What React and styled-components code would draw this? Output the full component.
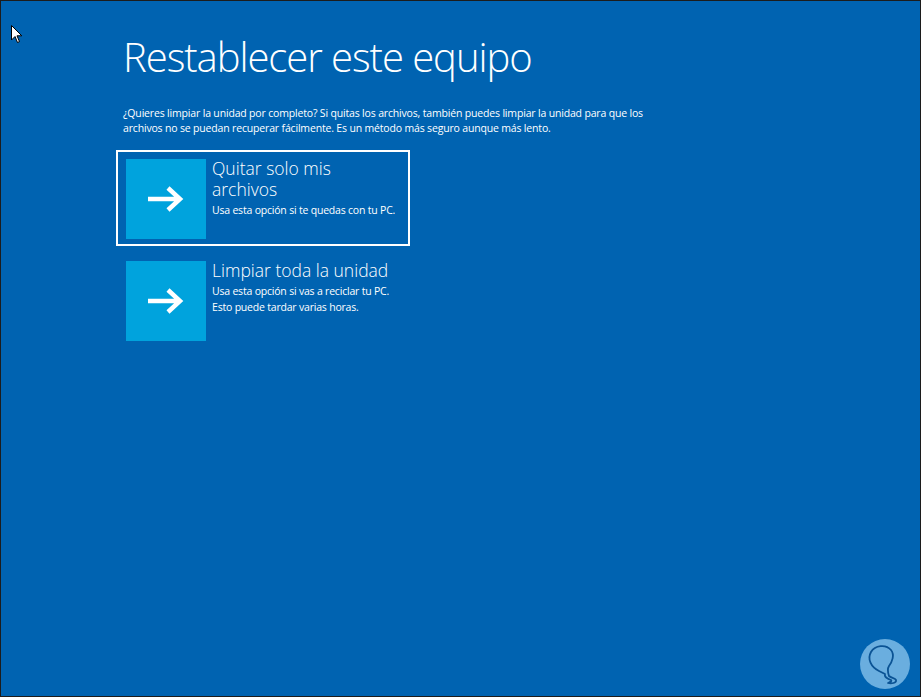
import React from 'react';
import styled, { createGlobalStyle } from 'styled-components';

const GlobalStyle = createGlobalStyle`
  html, body {
    margin: 0;
    padding: 0;
    background: #0063b1;
  }
`;

const Screen = styled.div`
  position: relative;
  box-sizing: border-box;
  width: 921px;
  height: 697px;
  overflow: hidden;
  background: #0063b1;
  border: 1px solid #1c1c1c;
  padding: 28px 0 0 122px;
  font-family: "Open Sans", "Noto Sans", sans-serif;
  color: #ffffff;
`;

const Title = styled.h1`
  margin: 0;
  font-weight: 300;
  font-size: 40px;
  line-height: 56px;
  letter-spacing: -1.05px;
`;

const Intro = styled.p`
  margin: 21px 0 0 0;
  width: 545px;
  font-size: 10.5px;
  line-height: 15px;
  letter-spacing: -0.17px;
`;

const Options = styled.div`
  display: flex;
  flex-direction: column;
  gap: 6px;
  margin: 14px 0 0 -7px;
`;

const Option = styled.div`
  display: flex;
  gap: 6px;
  width: 294px;
  box-sizing: border-box;
  padding: 7px 2px 5px 8px;
  border: 2px solid ${p => (p.$active ? '#ffffff' : 'transparent')};
`;

const Tile = styled.div`
  flex: none;
  width: 80px;
  height: 80px;
  background: #00a3dd;
  display: flex;
  align-items: center;
  justify-content: center;
`;

const Text = styled.div`
  flex: 1;
  display: flex;
  flex-direction: column;
`;

const OptionTitle = styled.div`
  max-width: 182px;
  font-weight: 300;
  font-size: 17.5px;
  line-height: 21px;
  margin: -1px 0 2px 0;
`;

const OptionDesc = styled.div`
  font-size: 10.5px;
  line-height: 16px;
  letter-spacing: -0.2px;
  white-space: nowrap;
`;

const Cursor = styled.svg`
  position: absolute;
  left: 10px;
  top: 24px;
`;

const Badge = styled.svg`
  position: absolute;
  right: 8px;
  bottom: 5px;
`;

const Arrow = () => (
  <svg width="40" height="28" viewBox="0 0 40 28">
    <path d="M2 14 H34 M22 3 L34 14 L22 25" stroke="#ffffff" strokeWidth="4.5" fill="none" strokeLinecap="butt" strokeLinejoin="miter" />
  </svg>
);

const options = [
  { title: 'Quitar solo mis archivos', desc: ['Usa esta opción si te quedas con tu PC.'], active: true },
  { title: 'Limpiar toda la unidad', desc: ['Usa esta opción si vas a reciclar tu PC.', 'Esto puede tardar varias horas.'] },
];

export default function App() {
  return (
    <>
      <GlobalStyle />
      <Screen>
        <Cursor width="12" height="20" viewBox="0 0 12 20">
          <path d="M0.5 0.5 L0.5 15 L4 11.5 L6.5 17.5 L8.5 16.6 L6 10.8 L10.8 10.8 Z" fill="#ffffff" stroke="#000000" strokeWidth="1" strokeLinejoin="round" />
        </Cursor>
        <Title>Restablecer este equipo</Title>
        <Intro>
          ¿Quieres limpiar la unidad por completo? Si quitas los archivos, también puedes limpiar la unidad para que los
          archivos no se puedan recuperar fácilmente. Es un método más seguro aunque más lento.
        </Intro>
        <Options>
          {options.map(o => (
            <Option key={o.title} $active={o.active}>
              <Tile><Arrow /></Tile>
              <Text>
                <OptionTitle>{o.title}</OptionTitle>
                {o.desc.map(d => <OptionDesc key={d}>{d}</OptionDesc>)}
              </Text>
            </Option>
          ))}
        </Options>
        <Badge width="54" height="54" viewBox="0 0 54 54">
          <circle cx="27" cy="27" r="25" fill="#6aaedf" />
          <path d="M21 34 C13 30 9 22 13 15 C17 8 28 7 33 13 C37 18 34 25 31 29 C29 32 30 36 31 39 C33 41 37 41 38 43 C39 46 33 47 30 46 C33 45 34 44 33 43 C30 42 26 40 27 37 C25 36 23 35 21 34 Z" fill="none" stroke="#0b5394" strokeWidth="1.8" strokeLinejoin="round" />
        </Badge>
      </Screen>
    </>
  );
}
